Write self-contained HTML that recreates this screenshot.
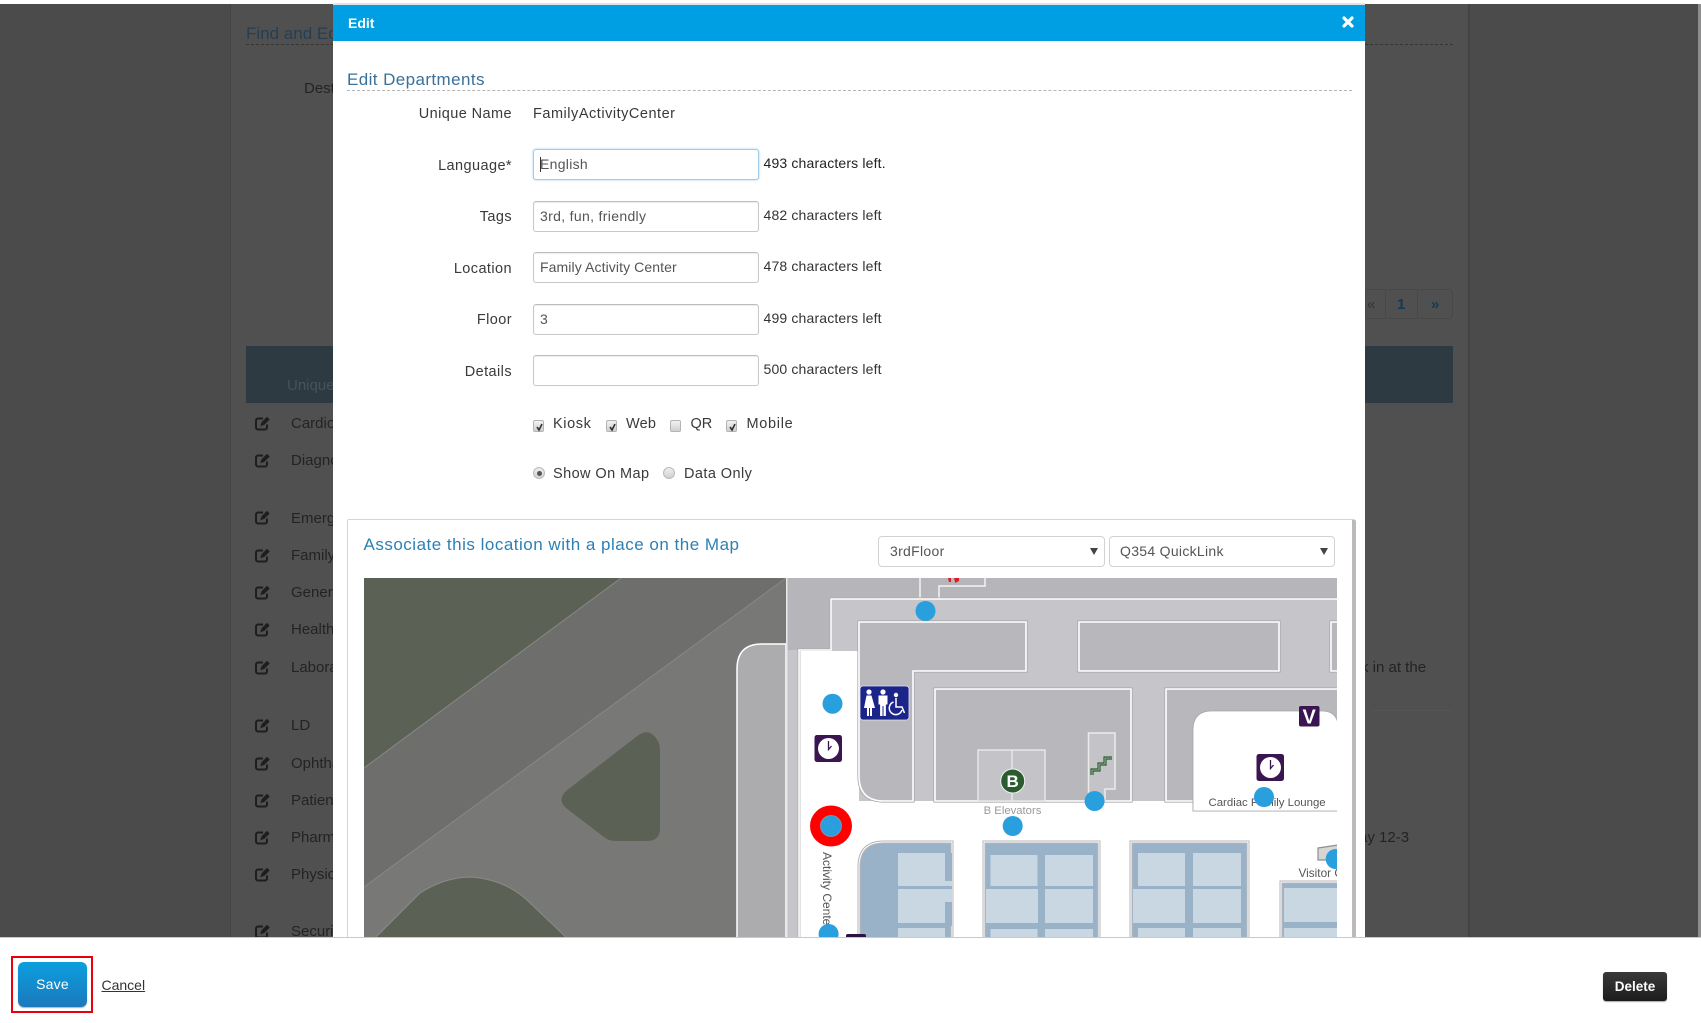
<!DOCTYPE html>
<html lang="en"><head><meta charset="utf-8"><title>Edit Departments</title>
<style>
html,body{margin:0;padding:0;width:1701px;height:1023px;overflow:hidden;background:#fff}
body{position:relative;font-family:"Liberation Sans",Arial,sans-serif;color:#333}
.a{position:absolute;white-space:nowrap}
.t{position:absolute;white-space:nowrap;font-size:14.5px;letter-spacing:.42px;line-height:18px;color:#3a3a3a}
.l{position:absolute;right:1189px;white-space:nowrap;font-size:14.5px;letter-spacing:.42px;line-height:18px;color:#3a3a3a}
.inp{position:absolute;left:533px;width:226px;height:31px;box-sizing:border-box;border:1px solid #c8c8c8;border-top-color:#bdbdbd;border-radius:3px;background:#fff;font-size:14px;letter-spacing:.3px;line-height:29px;padding-left:6px;color:#555;box-shadow:inset 0 1px 1px rgba(0,0,0,.08)}
.cnt{position:absolute;left:763.5px;white-space:nowrap;font-size:14px;letter-spacing:.16px;line-height:18px;color:#333}
.sel{position:absolute;top:536px;height:31px;box-sizing:border-box;border:1px solid #d2d2d2;border-radius:4px;background:#fff;font-size:14px;letter-spacing:.3px;line-height:28px;padding-left:11px;color:#555}
.sel i{position:absolute;right:6px;top:11px;width:0;height:0;border-left:4px solid transparent;border-right:4px solid transparent;border-top:7px solid #444}
.cb{position:absolute;top:419.5px;width:11px;height:12px;box-sizing:border-box;border:1px solid #b4b4b4;border-radius:2px;background:linear-gradient(#f2f2f2,#cfcfcf)}
.cb svg{position:absolute;left:1px;top:1px}
.rd{position:absolute;top:467px;width:12px;height:12px;box-sizing:border-box;border:1px solid #bbb;border-radius:50%;background:linear-gradient(#eee,#d0d0d0)}
.rd b{position:absolute;left:2.5px;top:2.5px;width:5px;height:5px;border-radius:50%;background:#555}
.r{position:absolute;left:291px;font-size:15px;line-height:18px;color:#232323;white-space:nowrap}
</style></head><body>

<!-- dim background page -->
<div class="a" style="left:0;top:4px;width:1701px;height:933px;background:#4b4b4b"></div>
<div class="a" style="left:230px;top:4px;width:1240px;height:933px;background:#505050;border-left:1px solid #454545;border-right:2px solid #434343;box-sizing:border-box"></div>
<div class="a" style="left:1698px;top:4px;width:3px;height:933px;background:#8d8d8d"></div>
<div class="a" style="left:246px;top:24px;font-size:17px;line-height:20px;color:#223f55">Find and Edit</div>
<div class="a" style="left:246px;top:44px;width:1207px;border-top:1.5px dashed #363636"></div>
<div class="a" style="left:304px;top:80px;font-size:15px;line-height:18px;color:#232323">Destination</div>
<div class="a" style="left:1365px;top:289px;width:88px;height:30px;box-sizing:border-box;border:1px solid #484848;border-radius:0 4px 4px 0"></div>
<div class="a" style="left:1385px;top:289px;width:33px;height:30px;box-sizing:border-box;border-left:1px solid #484848;border-right:1px solid #484848"></div>
<div class="a" style="left:1367px;top:296px;font-size:15px;line-height:18px;color:#333">«</div>
<div class="a" style="left:1397px;top:296px;font-size:15px;font-weight:bold;line-height:18px;color:#123a55">1</div>
<div class="a" style="left:1431px;top:296px;font-size:15px;font-weight:bold;line-height:18px;color:#123a55">»</div>
<div class="a" style="left:246px;top:346px;width:1207px;height:57px;background:#2e3a42"></div>
<div class="a" style="left:287px;top:377px;font-size:15px;line-height:18px;color:#46525c">Unique Name</div>
<div class="a" style="left:1372px;top:710px;width:80px;border-top:1px solid #555"></div>
<div class="a" style="left:1361px;top:658.500px;font-size:15px;line-height:18px;color:#232323">k in at the</div>
<div class="a" style="left:1359px;top:829px;font-size:15px;line-height:18px;color:#232323">ay 12-3</div>

<div class="r" style="top:415px">Cardiology</div>
<div class="r" style="top:452px">Diagnostic</div>
<div class="r" style="top:510px">Emergency</div>
<div class="r" style="top:547px">Family</div>
<div class="r" style="top:584px">General</div>
<div class="r" style="top:621px">Health</div>
<div class="r" style="top:659px">Laboratory</div>
<div class="r" style="top:717px">LD</div>
<div class="r" style="top:755px">Ophthalmology</div>
<div class="r" style="top:792px">Patient</div>
<div class="r" style="top:829px">Pharmacy</div>
<div class="r" style="top:866px">Physician</div>
<div class="r" style="top:923px">Security</div>

<svg class="a" style="left:0;top:0" width="340" height="937" fill="none" stroke="#1e1e1e" stroke-width="2">
<g id="ed"><path d="M263 418.500h-5a2 2 0 0 0-2 2v7a2 2 0 0 0 2 2h7a2 2 0 0 0 2-2v-3"/><path d="M261 425.500l1-3 5-5 2 2-5 5z" fill="#1e1e1e" stroke-width="1"/></g>
<use href="#ed" y="37"/><use href="#ed" y="94"/><use href="#ed" y="132"/><use href="#ed" y="169"/><use href="#ed" y="206"/><use href="#ed" y="244"/><use href="#ed" y="302"/><use href="#ed" y="340"/><use href="#ed" y="377"/><use href="#ed" y="414"/><use href="#ed" y="451"/><use href="#ed" y="508"/>
</svg>

<!-- modal -->
<div class="a" style="left:333px;top:3px;width:1032px;height:934px;background:#fff"></div>
<div class="a" style="left:333px;top:3px;width:1032px;height:2px;background:#e3e3e3"></div>
<div class="a" style="left:333px;top:5px;width:1032px;height:36px;background:#009fe3"></div>
<div class="a" style="left:348px;top:14px;font-size:14px;font-weight:bold;line-height:18px;color:#fff">Edit</div>
<svg class="a" style="left:1342px;top:16px" width="12" height="12"><path d="M2 2L10 10M10 2L2 10" stroke="#fff" stroke-width="3.2" stroke-linecap="round"/></svg>

<div class="a" style="left:347px;top:70px;font-size:17px;letter-spacing:.41px;line-height:20px;color:#3a7099">Edit Departments</div>
<div class="a" style="left:347px;top:90px;width:1005px;border-top:1px dashed #b5b5b5"></div>

<div class="l" style="top:105px">Unique Name</div>
<div class="t" style="left:533px;top:105px;letter-spacing:.52px">FamilyActivityCenter</div>

<div class="l" style="top:157px">Language*</div>
<div class="inp" style="top:149px;border-color:#9fcbe6;box-shadow:0 0 2px rgba(82,168,236,.55)"><span style="display:inline-block;border-left:1px solid #333;height:15px;vertical-align:-3px;margin-right:-1px"></span>English</div>
<div class="cnt" style="top:154px;color:#222">493 characters left.</div>

<div class="l" style="top:208px">Tags</div>
<div class="inp" style="top:200.5px;letter-spacing:.33px">3rd, fun, friendly</div>
<div class="cnt" style="top:206px">482 characters left</div>

<div class="l" style="top:260px">Location</div>
<div class="inp" style="top:252px;letter-spacing:.1px">Family Activity Center</div>
<div class="cnt" style="top:257px">478 characters left</div>

<div class="l" style="top:311px">Floor</div>
<div class="inp" style="top:303.5px">3</div>
<div class="cnt" style="top:309px">499 characters left</div>

<div class="l" style="top:363px">Details</div>
<div class="inp" style="top:355px"></div>
<div class="cnt" style="top:360px">500 characters left</div>

<div class="cb" style="left:533px"><svg width="9" height="10"><path d="M2 5l2 3 3-6" fill="none" stroke="#333" stroke-width="1.6"/></svg></div>
<div class="t" style="left:553px;top:415px;letter-spacing:.6px">Kiosk</div>
<div class="cb" style="left:606px"><svg width="9" height="10"><path d="M2 5l2 3 3-6" fill="none" stroke="#333" stroke-width="1.6"/></svg></div>
<div class="t" style="left:626px;top:415px;letter-spacing:.2px">Web</div>
<div class="cb" style="left:670px"></div>
<div class="t" style="left:690.5px;top:415px;letter-spacing:0">QR</div>
<div class="cb" style="left:726px"><svg width="9" height="10"><path d="M2 5l2 3 3-6" fill="none" stroke="#333" stroke-width="1.6"/></svg></div>
<div class="t" style="left:746.500px;top:415px;letter-spacing:.7px">Mobile</div>

<div class="rd" style="left:533px"><b></b></div>
<div class="t" style="left:553px;top:465px">Show On Map</div>
<div class="rd" style="left:663px"></div>
<div class="t" style="left:684px;top:465px">Data Only</div>

<!-- map panel -->
<div class="a" style="left:347px;top:519px;width:1009px;height:418px;box-sizing:border-box;border:1px solid #d5d5d5;border-top-width:1.5px;border-bottom:0;border-right:4px solid #bdb9bb;border-radius:2px 3px 0 0;background:#fff"></div>
<div class="a" style="left:363.5px;top:534.500px;font-size:17px;letter-spacing:.5px;line-height:20px;color:#2b80b5">Associate this location with a place on the Map</div>
<div class="sel" style="left:878px;width:226.5px">3rdFloor<i></i></div>
<div class="sel" style="left:1109px;width:226px;padding-left:10px">Q354 QuickLink<i></i></div>

<svg class="a" style="left:364px;top:578px" width="973" height="359" viewBox="364 578 973 359" font-family="'Liberation Sans',sans-serif">
<defs>
<path id="hall" d="M799 945V650H831V599H1345V945Z"/>
<path id="rA" d="M859 622H1026V671H913V801H884Q859 801 859 776Z"/>
<path id="rB" d="M1079 622H1279V671H1079Z"/>
<path id="rC" d="M1331 622H1345V671H1331Z"/>
<path id="rD" d="M935 689H1131V801H935Z"/>
<path id="rE" d="M1166 689H1345V801H1166Z"/>
<path id="lounge" d="M1337 724Q1335 712 1322 712H1212Q1194 712 1194 730V810H1337Z"/>
<path id="rF" d="M952 945V842H884Q859 842 859 867V945Z"/>
<path id="rG" d="M984 945V842H1099V945Z"/>
<path id="rH" d="M1131 945V842H1248V945Z"/>
<path id="rI" d="M1281 945V882H1345V945Z"/>
<path id="lane" d="M737 945V669Q737 644 762 644H786V945Z"/>
</defs>
<!-- outdoors -->
<rect x="364" y="578" width="423" height="359" fill="#787876"/>
<path d="M621 578H786L364 887V768Z" fill="#6e6e6c"/>
<path d="M621 578L364 768V578Z" fill="#5b6155"/>
<path d="M621 578L364 768M786 578L364 887" stroke="#888886" stroke-width="1" fill="none"/>
<path d="M636 737Q648 727 656 738Q660 743 660 750V828Q660 841 647 841H615Q609 841 604 837L566 808Q557 800 566 791Z" fill="#5b6155"/>
<path d="M372 941L420 893Q445 877 472 877 505 880 527 900L570 941Z" fill="#5b6155" stroke="#8a8a88" stroke-width="1"/>
<use href="#lane" fill="#acacae" stroke="#fff" stroke-width="1.5"/>
<!-- building -->
<rect x="786" y="578" width="552" height="359" fill="#b6b6ba"/>
<rect x="786" y="578" width="1.5" height="359" fill="#e8e8e8"/>
<rect x="787.5" y="650" width="11" height="287" fill="#c5c5ca"/>
<path d="M920 578V599M939 599V586H985V578" stroke="#f4f4f4" stroke-width="1.5" fill="none"/>
<path d="M948 578h3v4h-2zM954 578h5v3l-4 2v-1z" fill="#e01a22"/>
<use href="#hall" fill="#c5c5ca" stroke="#a9a9ad" stroke-width="3"/>
<use href="#hall" fill="#c5c5ca" stroke="#fff" stroke-width="1.5"/>
<path d="M800.5 651H859V801H1337V937H800.5Z" fill="#fff"/>
<g stroke="#a9a9ad" stroke-width="3.2" fill="#b8b8bc"><use href="#rA"/><use href="#rB"/><use href="#rC"/><use href="#rD"/><use href="#rE"/></g>
<g stroke="#fff" stroke-width="1.6" fill="#b8b8bc"><use href="#rA"/><use href="#rB"/><use href="#rC"/><use href="#rD"/><use href="#rE"/></g>
<use href="#lounge" fill="#fff" stroke="#a9a9ad" stroke-width="3"/>
<use href="#lounge" fill="#fff" stroke="#fff" stroke-width="1.2"/>
<rect x="1196" y="800" width="145" height="6" fill="#fff"/>
<rect x="978" y="750" width="67" height="51" fill="#c4c4c8" stroke="#ececec" stroke-width="1.3"/>
<path d="M1012 750V801" stroke="#ececec" stroke-width="1.3"/>
<path d="M1088.5 733H1115V789H1105V801H1088.5Z" fill="#c4c4c8" stroke="#ececec" stroke-width="1.5"/>
<path d="M1092 775V770H1099V764H1105V758H1112" fill="none" stroke="#2a5c30" stroke-width="3.2"/>
<path d="M1092 775V770H1099V764H1105V758H1112" fill="none" stroke="#e6efe6" stroke-width=".6"/>
<!-- blue rooms -->
<g stroke="#b5b5b9" stroke-width="3" fill="#9ab2c8"><use href="#rF"/><use href="#rG"/><use href="#rH"/><use href="#rI"/></g>
<g stroke="#fff" stroke-width="1" fill="none"><use href="#rF"/><use href="#rG"/><use href="#rH"/><use href="#rI"/></g>
<g fill="#c9d7e2">
<rect x="898" y="853" width="54" height="33"/><rect x="898" y="889" width="54" height="34"/><rect x="898" y="928" width="47" height="10"/>
<rect x="990.5" y="855" width="47" height="31"/><rect x="1045" y="855" width="48" height="31"/><rect x="986" y="889" width="52" height="34"/><rect x="1045" y="889" width="48" height="34"/><rect x="990.5" y="929" width="47" height="9"/><rect x="1045" y="929" width="48" height="9"/>
<rect x="1138" y="853" width="47" height="33"/><rect x="1193" y="853" width="48" height="33"/><rect x="1133" y="889" width="52" height="34"/><rect x="1193" y="889" width="48" height="34"/><rect x="1138" y="928" width="47" height="10"/><rect x="1193" y="928" width="48" height="10"/>
<rect x="1284" y="888" width="53" height="34"/><rect x="1284" y="928" width="53" height="10"/>
</g>
<rect x="945" y="886" width="7" height="3" fill="#9ab2c8"/><rect x="945" y="853" width="7" height="28" fill="#9ab2c8"/><rect x="945" y="902" width="7" height="24" fill="#9ab2c8"/>
<rect x="1093" y="857" width="4" height="24" fill="#9ab2c8"/><rect x="1093" y="902" width="4" height="24" fill="#9ab2c8"/>
<rect x="1241" y="857" width="5" height="24" fill="#9ab2c8"/><rect x="1241" y="902" width="5" height="24" fill="#9ab2c8"/>
<!-- visitor icon -->
<path d="M1318 848L1338 845V860H1318Z" fill="#d8d6d2" stroke="#8e8e8e" stroke-width="1.2"/>
<!-- labels -->
<text x="1012.5" y="814" font-size="11.3" text-anchor="middle" fill="#9a9a9a">B Elevators</text>
<text x="1208.5" y="806" font-size="11.4" fill="#555">Cardiac Family Lounge</text>
<text x="1298.5" y="877" font-size="11.8" fill="#555">Visitor Center</text>
<text transform="translate(823 852) rotate(90)" font-size="12" fill="#555">Activity Center</text>
<!-- restroom -->
<rect x="860" y="686" width="49" height="34" rx="3" fill="#1b2488" stroke="#dfe3f2" stroke-width=".8"/>
<g fill="#fff">
<circle cx="869" cy="692" r="2.6"/><path d="M866.5 695.5h5L875 708h-3v8h-2v-8h-1v8h-2v-8h-3Z"/>
<circle cx="883" cy="692" r="2.6"/><path d="M878.5 695.5h9v9h-1.6v11.5h-2.4v-10h-1v10h-2.4v-11.500h-1.600Z"/>
<circle cx="896" cy="695" r="2.2"/>
</g>
<path d="M896 698v9h6l2.500 6M893.500 702a6.500 6.500 0 1 0 8.500 8" fill="none" stroke="#fff" stroke-width="1.500"/>
<!-- clocks -->
<g id="clk"><rect x="814.500" y="735" width="27.500" height="27" rx="2.500" fill="#3a1550"/><circle cx="828.500" cy="748.500" r="10.500" fill="#fff"/><path d="M828.500 741V749.500L831.500 746" fill="none" stroke="#3a1550" stroke-width="1.300"/></g>
<use href="#clk" x="442" y="19"/>
<rect x="1299" y="706" width="20.500" height="20.500" rx="2" fill="#3a1550"/>
<text x="1309.200" y="723.500" font-size="20" font-weight="bold" text-anchor="middle" fill="#fff">V</text>
<rect x="846" y="934" width="20" height="6" rx="2" fill="#2b1240"/>
<!-- B -->
<circle cx="1012.700" cy="781" r="12" fill="#2a5c30" stroke="#f0f0f0" stroke-width="1"/>
<text x="1012.700" y="787" font-size="17" font-weight="bold" text-anchor="middle" fill="#fff">B</text>
<!-- dots -->
<ellipse cx="831" cy="826" rx="21" ry="20.500" fill="#f00"/>
<g fill="#2a9fde">
<circle cx="925.500" cy="611" r="10"/><circle cx="832.500" cy="703.700" r="10"/>
<circle cx="831" cy="826" r="10.500" stroke="#8a9aa5" stroke-width=".8"/>
<circle cx="1012.700" cy="826" r="10"/><circle cx="1094.600" cy="801" r="10"/>
<circle cx="1264" cy="797" r="10"/><circle cx="1335.700" cy="859" r="10"/><circle cx="828.600" cy="934" r="10"/>
</g>
</svg>

<!-- footer -->
<div class="a" style="left:0;top:937px;width:1701px;height:86px;background:#fff;border-top:1.5px solid #c9c9c9;box-sizing:border-box"></div>
<div class="a" style="left:11px;top:956px;width:82px;height:57px;box-sizing:border-box;border:2px solid #e8000d"></div>
<div class="a" style="left:18px;top:962px;width:69px;height:45px;border-radius:6px;background:linear-gradient(#0b9fdf,#1b79bc);box-shadow:0 1px 1px rgba(0,0,0,.3);color:#fff;font-size:14px;letter-spacing:.2px;line-height:45px;text-align:center">Save</div>
<div class="a" style="left:101.500px;top:975.500px;font-size:14px;letter-spacing:0;line-height:18px;color:#333;text-decoration:underline">Cancel</div>
<div class="a" style="left:1603px;top:972px;width:64px;height:29px;border-radius:3px;background:linear-gradient(#3a3a3a,#1c1c1c);box-shadow:0 1px 1px rgba(0,0,0,.35);color:#fff;font-size:13.500px;letter-spacing:0;line-height:29px;text-align:center;font-weight:bold">Delete</div>
</body></html>
